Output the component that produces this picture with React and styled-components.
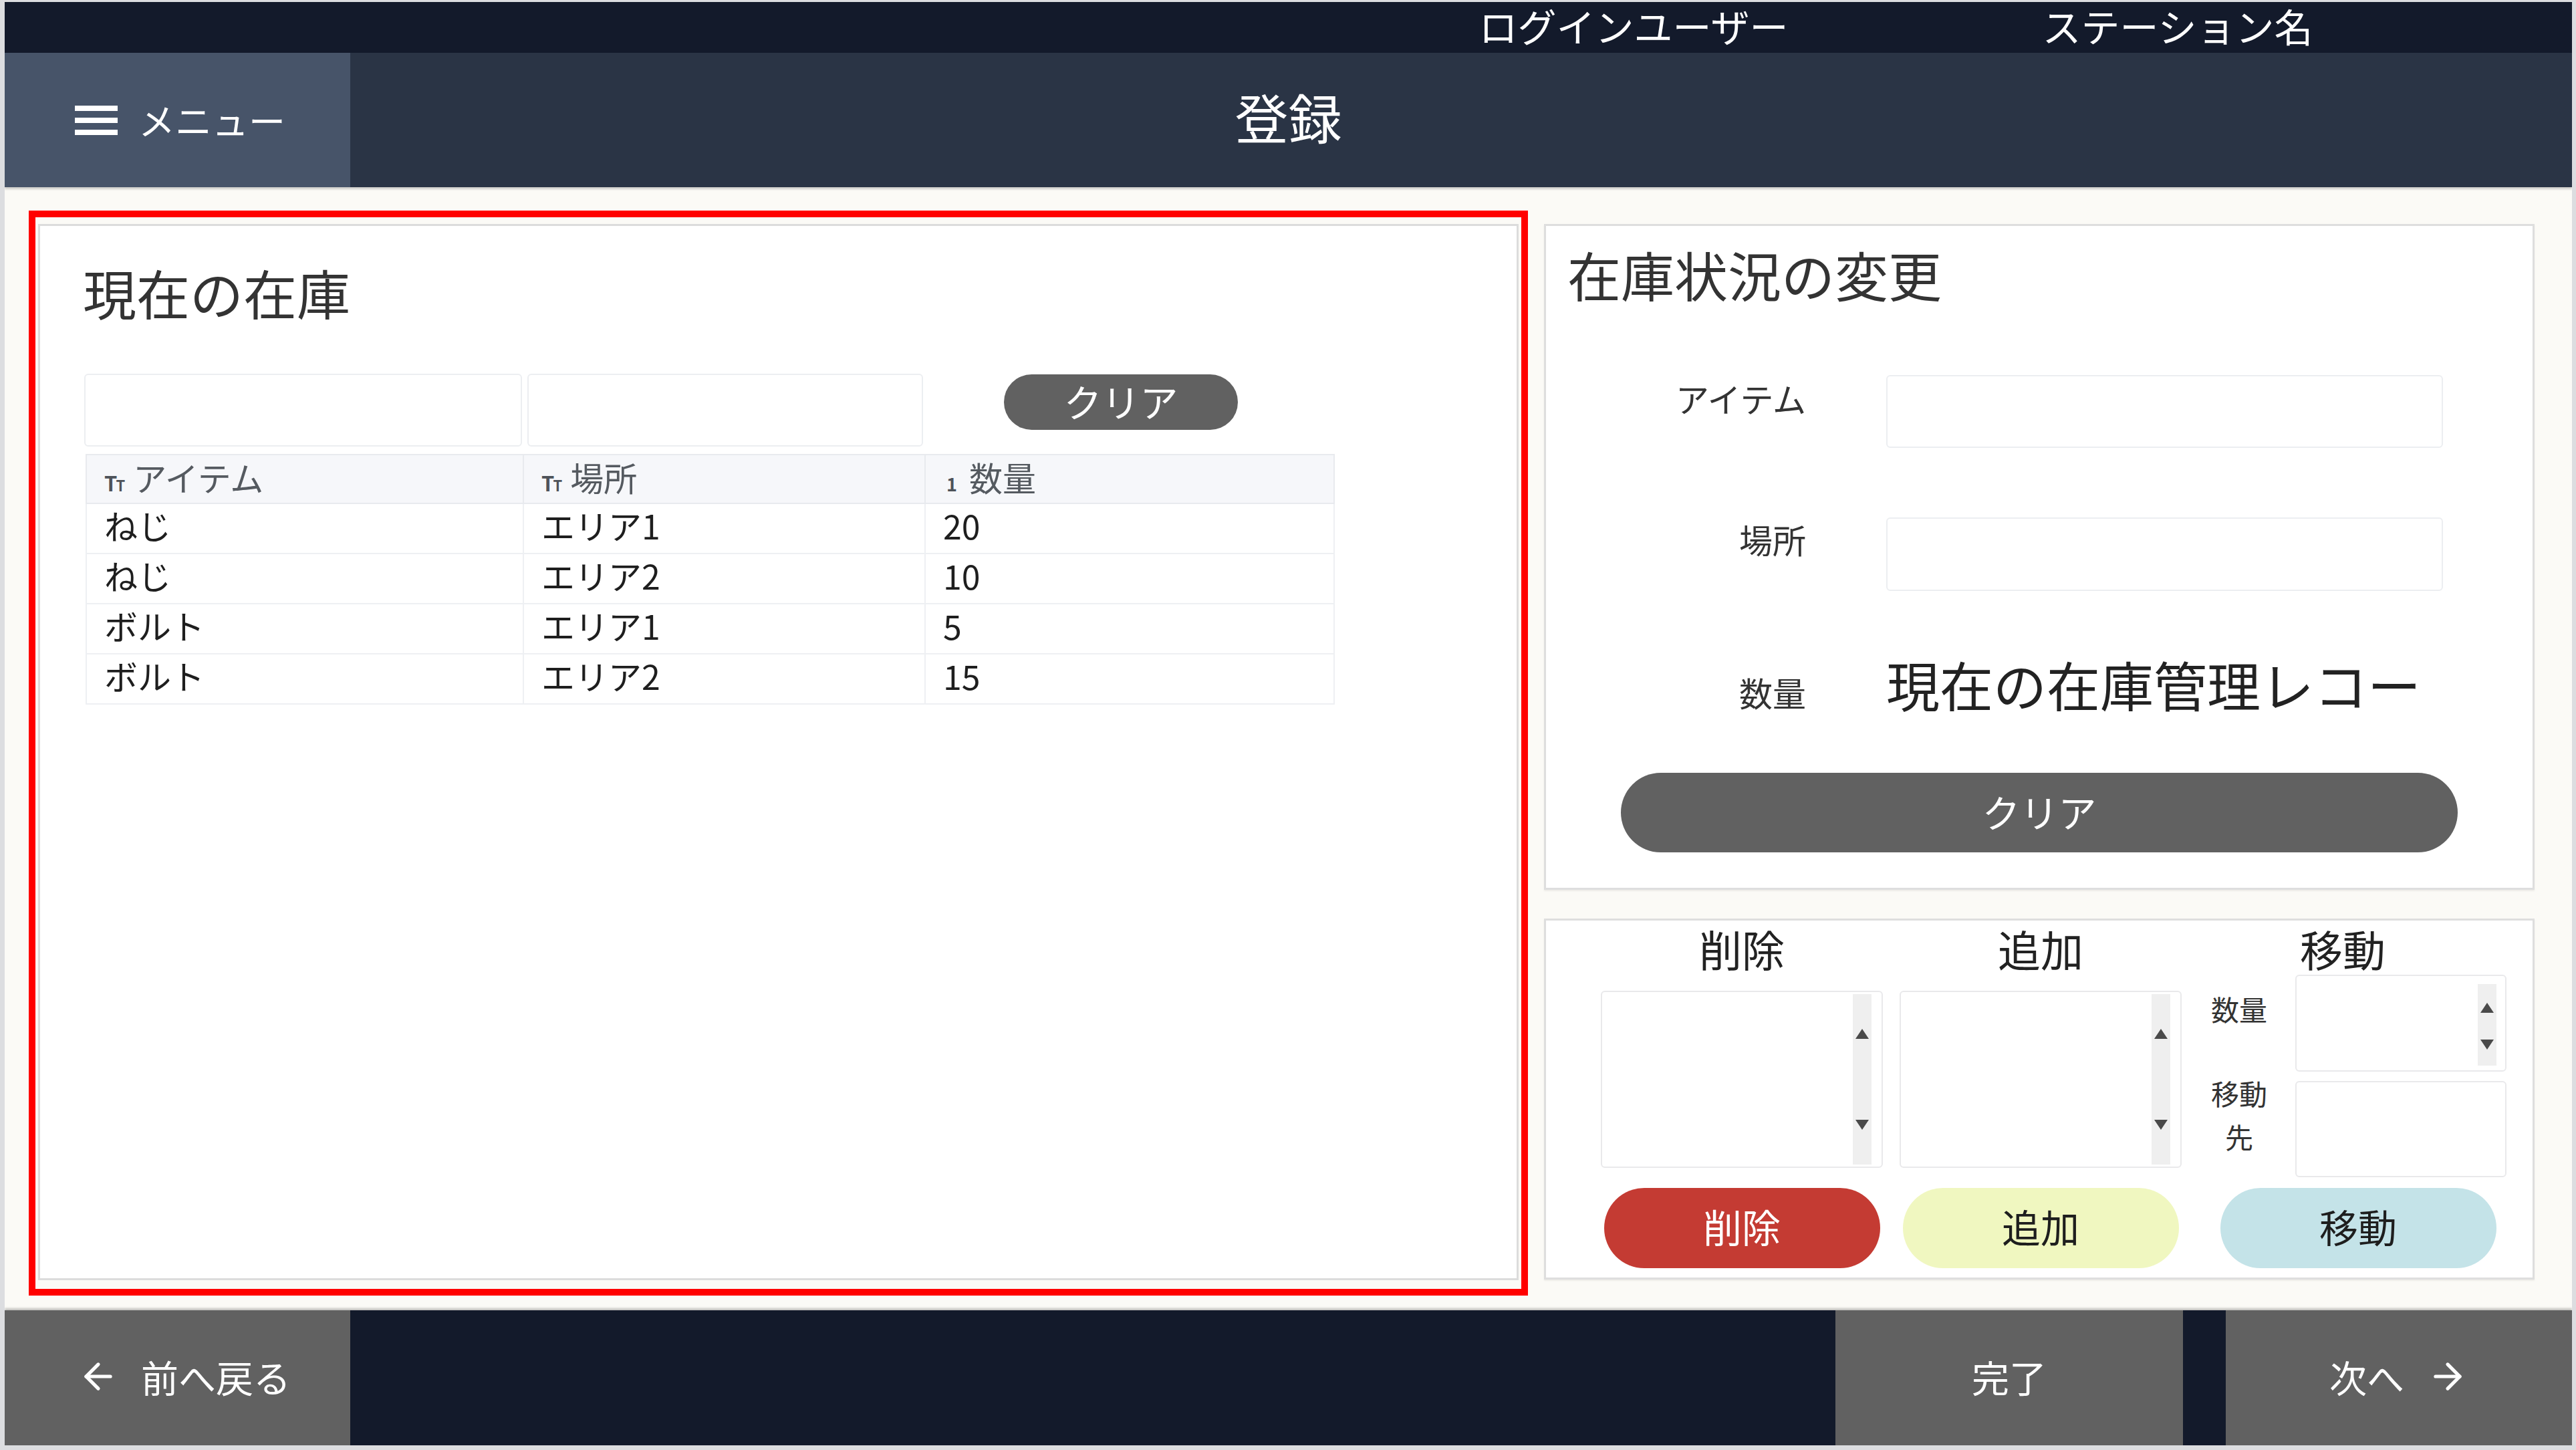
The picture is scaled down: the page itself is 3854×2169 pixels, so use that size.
import React from "react";
import styled, { createGlobalStyle } from "styled-components";
import { ArrowLeft, ArrowRight } from "lucide-react";

const FONT = `"Noto Sans CJK JP", "Noto Sans", sans-serif`;

const GlobalStyle = createGlobalStyle`
  *, *::before, *::after { box-sizing: border-box; }
  html, body { margin: 0; padding: 0; background: #fbfaf6; }
  body { font-family: ${FONT}; }
  #root { width: 3854px; height: 2169px; }
`;

const Screen = styled.div`
  width: 3854px;
  height: 2169px;
  display: flex;
  flex-direction: column;
  border-style: solid;
  border-color: #dcdde0;
  border-width: 3px 6px 7px 7px;
  background: #fbfaf6;
  overflow: hidden;
  font-family: ${FONT};
`;

/* ---------- top bar ---------- */
const TopBar = styled.div`
  flex: none;
  height: 76px;
  background: #131a2b;
  display: flex;
  justify-content: flex-end;
  padding-right: 183px;
`;

const TopBarCell = styled.div`
  width: 814px;
  height: 76px;
  display: flex;
  align-items: center;
  justify-content: center;
  padding-bottom: 6px;
  color: #ffffff;
  font-size: 58px;
  line-height: 1.15;
  white-space: nowrap;
`;

/* ---------- header ---------- */
const Header = styled.header`
  flex: none;
  height: 201px;
  background: #2a3445;
  display: grid;
  grid-template-columns: 517px 1fr 517px;
  box-shadow: 0 3px 3px rgba(0, 0, 0, 0.18);
  position: relative;
  z-index: 1;
`;

const MenuButton = styled.button`
  display: flex;
  align-items: center;
  gap: 31px;
  padding: 0 0 0 105px;
  margin: 0;
  border: none;
  background: #475469;
  color: #ffffff;
  font-family: ${FONT};
  font-size: 55px;
  line-height: 1.2;
  cursor: pointer;
`;

const MenuLabel = styled.span`
  padding-bottom: 4px;
`;

const PageTitle = styled.h1`
  margin: 0;
  padding-bottom: 14px;
  display: flex;
  align-items: center;
  justify-content: center;
  color: #ffffff;
  font-size: 80px;
  line-height: 1.2;
  font-weight: 400;
`;

const HamburgerIcon = () => (
  <svg width="64" height="44" viewBox="0 0 64 44" aria-hidden="true">
    <rect x="0" y="0" width="64" height="8" fill="#ffffff" />
    <rect x="0" y="18" width="64" height="8" fill="#ffffff" />
    <rect x="0" y="36" width="64" height="8" fill="#ffffff" />
  </svg>
);

/* ---------- main ---------- */
const Main = styled.main`
  flex: 1;
  min-height: 0;
  display: flex;
  gap: 24px;
  padding: 35px 56px 22px 36px;
`;

const HighlightFrame = styled.section`
  flex: none;
  width: 2243px;
  border: 10px solid #ff0000;
  padding: 10px 4px 13px 4px;
  display: flex;
`;

const StockPanel = styled.div`
  flex: 1;
  background: #ffffff;
  border: 3px solid #dcdcdc;
  padding: 50px 0 0 68px;
`;

const PanelTitle = styled.h2`
  margin: 0 0 0 -4px;
  font-size: 80px;
  line-height: 96px;
  font-weight: 400;
  color: #333333;
`;

const FilterRow = styled.div`
  margin-top: 75px;
  height: 109px;
  display: grid;
  grid-template-columns: 656px 601px 612px;
`;

const FilterInput = styled.input`
  display: block;
  height: 109px;
  margin: ${(p) => p.$margin || "0"};
  border: 2px solid #eceef1;
  border-radius: 6px;
  background: #ffffff;
  outline: none;
  font-family: ${FONT};
  font-size: 50px;
`;

const PillButton = styled.button`
  border: none;
  border-radius: 999px;
  background: ${(p) => p.$bg || "#616161"};
  color: ${(p) => p.$fg || "#ffffff"};
  font-family: ${FONT};
  font-size: ${(p) => p.$size || "57px"};
  line-height: 1.2;
  padding: 0 0 4px;
  cursor: pointer;
`;

const SmallClearButton = styled(PillButton)`
  align-self: start;
  justify-self: start;
  width: 350px;
  height: 83px;
  margin: 1px 0 0 117px;
`;

const StockTable = styled.table`
  margin-top: 11px;
  width: 1867px;
  border-collapse: collapse;
  table-layout: fixed;
  font-family: ${FONT};
`;

const HeadCell = styled.th`
  height: 73px;
  padding: 0 0 8px ${(p) => p.$pad || "26px"};
  background: #f6f7fa;
  border: 2px solid #e8eaee;
  text-align: left;
  font-weight: 400;
  font-size: 50px;
  line-height: 1;
  color: #555a60;
  white-space: nowrap;
`;

const BodyCell = styled.td`
  height: 75px;
  padding: 0 0 12px 26px;
  border: 2px solid #eef0f3;
  font-size: 50px;
  line-height: 1;
  color: #1e1e1e;
  white-space: nowrap;
`;

const TypeIcon = styled.span`
  display: inline-block;
  margin-right: 14px;
  font-size: 31px;
  font-weight: 700;
  color: #4d5259;
  letter-spacing: -2px;
`;

const TypeIconSmall = styled.span`
  font-size: 22px;
`;

const NumIcon = styled.span`
  display: inline-block;
  margin-right: 18px;
  font-size: 27px;
  font-weight: 700;
  color: #4d5259;
`;

/* ---------- right column ---------- */
const SideColumn = styled.div`
  flex: none;
  width: 1482px;
  display: flex;
  flex-direction: column;
  gap: 43px;
  padding-top: 20px;
`;

const Card = styled.div`
  flex: none;
  height: ${(p) => p.$height};
  background: #ffffff;
  border: 3px solid #dedede;
  box-shadow: 0 2px 2px rgba(0, 0, 0, 0.06);
`;

const ChangeCard = styled(Card)`
  display: flex;
  flex-direction: column;
  padding: 23px 0 53px 0;
`;

const CardTitle = styled.h2`
  margin: 0;
  padding-left: 32px;
  font-size: 80px;
  line-height: 96px;
  font-weight: 400;
  color: #333333;
`;

const FormRow = styled.div`
  display: grid;
  grid-template-columns: 389px 833px;
  column-gap: 120px;
  align-items: ${(p) => p.$align || "start"};
  margin-top: ${(p) => p.$top};
`;

const FieldLabel = styled.label`
  text-align: right;
  font-size: 50px;
  line-height: 60px;
  color: #333333;
  padding-top: ${(p) => p.$top || "0"};
`;

const TextField = styled.input`
  display: block;
  width: 833px;
  height: ${(p) => p.$h || "109px"};
  border: 2px solid #eceef1;
  border-radius: 6px;
  background: #ffffff;
  outline: none;
  font-family: ${FONT};
  font-size: 50px;
`;

const FieldValue = styled.div`
  font-size: 80px;
  line-height: 96px;
  color: #222222;
  white-space: nowrap;
`;

const WideClearButton = styled(PillButton)`
  width: 1252px;
  height: 119px;
  margin: 86px auto 0;
`;

const ActionCard = styled(Card)`
  display: flex;
  padding: 8px 39px 14px 82px;
`;

const ActionColumn = styled.div`
  flex: none;
  width: ${(p) => p.$width};
  margin-left: ${(p) => p.$gap || "0"};
  display: flex;
  flex-direction: column;
`;

const ActionHeading = styled.div`
  height: 72px;
  display: flex;
  align-items: center;
  justify-content: center;
  padding-bottom: 4px;
  font-size: 64px;
  line-height: 1.15;
  color: #222222;
  padding-right: ${(p) => p.$shift || "0"};
`;

const ActionBody = styled.div`
  height: 303px;
  margin-top: 1px;
`;

const SpinBox = styled.div`
  height: ${(p) => p.$h};
  margin-top: ${(p) => p.$top || "0"};
  border: 2px solid #e9e9eb;
  border-radius: 6px;
  background: #ffffff;
  display: flex;
  justify-content: flex-end;
  padding: ${(p) => p.$pad || "3px 15px 3px 0"};
`;

const ScrollStrip = styled.div`
  width: 28px;
  background: #efefef;
  display: flex;
  flex-direction: column;
  align-items: center;
  justify-content: space-between;
  padding: ${(p) => p.$pad};
`;

const ArrowUp = styled.div`
  width: 0;
  height: 0;
  border-left: 10px solid transparent;
  border-right: 10px solid transparent;
  border-bottom: 15px solid #4a4a4a;
`;

const ArrowDown = styled.div`
  width: 0;
  height: 0;
  border-left: 10px solid transparent;
  border-right: 10px solid transparent;
  border-top: 15px solid #4a4a4a;
`;

const MoveGrid = styled.div`
  display: grid;
  grid-template-columns: 88px 316px;
  grid-template-rows: 145px 144px;
  column-gap: 40px;
  row-gap: 14px;
`;

const MoveLabel = styled.div`
  align-self: center;
  margin-bottom: 44px;
  font-size: 42px;
  line-height: 65px;
  text-align: center;
  color: #333333;
`;

const PlainBox = styled.div`
  border: 2px solid #e9e9eb;
  border-radius: 6px;
  background: #ffffff;
`;

const ActionButton = styled(PillButton)`
  align-self: center;
  width: 413px;
  height: 120px;
  margin-top: 16px;
`;

/* ---------- footer ---------- */
const Footer = styled.footer`
  flex: none;
  height: 202px;
  background: #131a2b;
  display: flex;
  box-shadow: 0 -3px 3px rgba(0, 0, 0, 0.22);
  position: relative;
  z-index: 1;
`;

const FooterButton = styled.button`
  flex: none;
  width: ${(p) => p.$width};
  margin: 0;
  margin-left: ${(p) => p.$ml || "0"};
  margin-right: ${(p) => p.$mr || "0"};
  padding: 0 0 4px ${(p) => p.$pl || "0"};
  border: none;
  background: #616161;
  color: #ffffff;
  font-family: ${FONT};
  font-size: 56px;
  line-height: 1.2;
  display: flex;
  align-items: center;
  justify-content: ${(p) => p.$justify || "center"};
  gap: ${(p) => p.$gap || "0"};
  cursor: pointer;
`;

const rows = [
  { item: "ねじ", place: "エリア1", qty: 20 },
  { item: "ねじ", place: "エリア2", qty: 10 },
  { item: "ボルト", place: "エリア1", qty: 5 },
  { item: "ボルト", place: "エリア2", qty: 15 },
];

const Spinner = ({ h, top, pad, stripPad }) => (
  <SpinBox $h={h} $top={top} $pad={pad}>
    <ScrollStrip $pad={stripPad}>
      <ArrowUp />
      <ArrowDown />
    </ScrollStrip>
  </SpinBox>
);

export default function App() {
  return (
    <>
      <GlobalStyle />
      <Screen>
        <TopBar>
          <TopBarCell>ログインユーザー</TopBarCell>
          <TopBarCell>ステーション名</TopBarCell>
        </TopBar>

        <Header>
          <MenuButton>
            <HamburgerIcon />
            <MenuLabel>メニュー</MenuLabel>
          </MenuButton>
          <PageTitle>登録</PageTitle>
          <div />
        </Header>

        <Main>
          <HighlightFrame>
            <StockPanel>
              <PanelTitle>現在の在庫</PanelTitle>
              <FilterRow>
                <FilterInput $margin="0 3px 0 -2px" />
                <FilterInput $margin="0 4px 0 5px" />
                <SmallClearButton>クリア</SmallClearButton>
              </FilterRow>
              <StockTable>
                <colgroup>
                  <col style={{ width: "654px" }} />
                  <col style={{ width: "601px" }} />
                  <col style={{ width: "612px" }} />
                </colgroup>
                <thead>
                  <tr>
                    <HeadCell>
                      <TypeIcon>
                        T<TypeIconSmall>T</TypeIconSmall>
                      </TypeIcon>
                      アイテム
                    </HeadCell>
                    <HeadCell>
                      <TypeIcon>
                        T<TypeIconSmall>T</TypeIconSmall>
                      </TypeIcon>
                      場所
                    </HeadCell>
                    <HeadCell $pad="31px">
                      <NumIcon>1</NumIcon>
                      数量
                    </HeadCell>
                  </tr>
                </thead>
                <tbody>
                  {rows.map((r, i) => (
                    <tr key={i}>
                      <BodyCell>{r.item}</BodyCell>
                      <BodyCell>{r.place}</BodyCell>
                      <BodyCell>{r.qty}</BodyCell>
                    </tr>
                  ))}
                </tbody>
              </StockTable>
            </StockPanel>
          </HighlightFrame>

          <SideColumn>
            <ChangeCard $height="996px">
              <CardTitle>在庫状況の変更</CardTitle>
              <FormRow $top="104px">
                <FieldLabel $top="4px">アイテム</FieldLabel>
                <TextField />
              </FormRow>
              <FormRow $top="104px">
                <FieldLabel $top="2px">場所</FieldLabel>
                <TextField $h="110px" />
              </FormRow>
              <FormRow $top="90px" $align="baseline">
                <FieldLabel>数量</FieldLabel>
                <FieldValue>現在の在庫管理レコー</FieldValue>
              </FormRow>
              <WideClearButton>クリア</WideClearButton>
            </ChangeCard>

            <ActionCard $height="540px">
              <ActionColumn $width="422px">
                <ActionHeading>削除</ActionHeading>
                <ActionBody>
                  <Spinner h="265px" top="24px" stripPad="52px 0" />
                </ActionBody>
                <ActionButton $bg="#c43b33" $fg="#ffffff" $size="58px">
                  削除
                </ActionButton>
              </ActionColumn>

              <ActionColumn $width="422px" $gap="25px">
                <ActionHeading>追加</ActionHeading>
                <ActionBody>
                  <Spinner h="265px" top="24px" stripPad="52px 0" />
                </ActionBody>
                <ActionButton $bg="#f0f7c0" $fg="#1e1e1e" $size="58px">
                  追加
                </ActionButton>
              </ActionColumn>

              <ActionColumn $width="444px" $gap="42px">
                <ActionHeading $shift="46px">移動</ActionHeading>
                <ActionBody>
                  <MoveGrid>
                    <MoveLabel>数量</MoveLabel>
                    <Spinner
                      h="145px"
                      pad="12px 13px 7px 0"
                      stripPad="28px 0 24px"
                    />
                    <MoveLabel>移動先</MoveLabel>
                    <PlainBox />
                  </MoveGrid>
                </ActionBody>
                <ActionButton $bg="#c4e3e8" $fg="#1e1e1e" $size="58px">
                  移動
                </ActionButton>
              </ActionColumn>
            </ActionCard>
          </SideColumn>
        </Main>

        <Footer>
          <FooterButton $width="517px" $justify="flex-start" $pl="109px" $gap="33px">
            <ArrowLeft size={62} strokeWidth={2} />
            <span>前へ戻る</span>
          </FooterButton>
          <FooterButton $width="520px" $ml="auto" $mr="64px">
            完了
          </FooterButton>
          <FooterButton $width="518px" $gap="34px">
            <span>次へ</span>
            <ArrowRight size={62} strokeWidth={2} />
          </FooterButton>
        </Footer>
      </Screen>
    </>
  );
}
